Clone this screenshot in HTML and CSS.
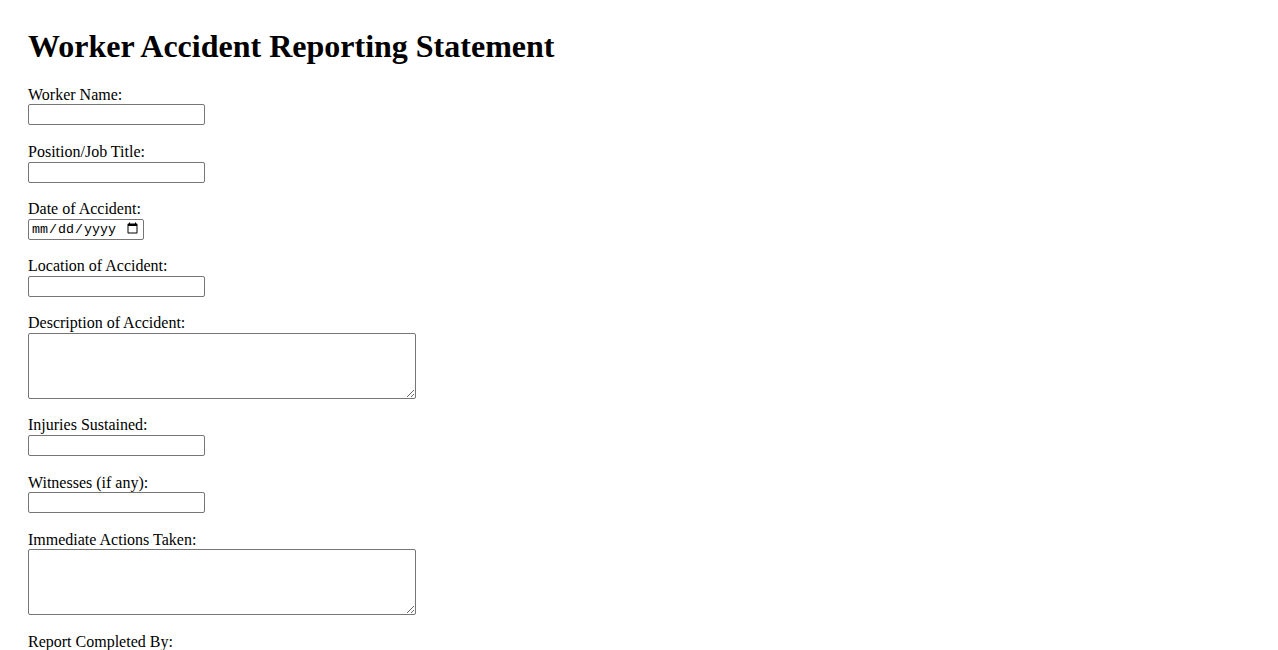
FILE: index.html
```html
<!DOCTYPE html>
<html lang="en">
<head>
<meta charset="utf-8">
<title>Worker Accident Reporting Statement</title>
<link rel="stylesheet" href="styles.css">
</head>
<body>
<div class="page">
  <h1 class="title">Worker Accident Reporting Statement</h1>
  <form class="report">
    <div class="field">
      <label for="name">Worker Name:</label>
      <input class="text" type="text" id="name">
    </div>
    <div class="field">
      <label for="position">Position/Job Title:</label>
      <input class="text" type="text" id="position">
    </div>
    <div class="field">
      <label for="date">Date of Accident:</label>
      <input class="date" type="date" id="date">
    </div>
    <div class="field">
      <label for="location">Location of Accident:</label>
      <input class="text" type="text" id="location">
    </div>
    <div class="field">
      <label for="description">Description of Accident:</label>
      <textarea class="area" id="description"></textarea>
    </div>
    <div class="field">
      <label for="injuries">Injuries Sustained:</label>
      <input class="text" type="text" id="injuries">
    </div>
    <div class="field">
      <label for="witnesses">Witnesses (if any):</label>
      <input class="text" type="text" id="witnesses">
    </div>
    <div class="field">
      <label for="actions">Immediate Actions Taken:</label>
      <textarea class="area" id="actions"></textarea>
    </div>
    <div class="field">
      <label for="completed">Report Completed By:</label>
      <input class="text" type="text" id="completed">
    </div>
  </form>
</div>
</body>
</html>
```

FILE: styles.css
```css
html, body {
  margin: 0;
  padding: 0;
  background: #ffffff;
}

body {
  font-family: "Liberation Serif", "Times New Roman", serif;
  font-size: 16px;
  color: #000000;
}

.page {
  padding: 28px;
}

.title {
  margin: 0 0 21px 0;
  font-size: 32px;
  font-weight: bold;
  line-height: 37px;
}

.report {
  display: flex;
  flex-direction: column;
}

.field {
  display: flex;
  flex-direction: column;
  align-items: flex-start;
  margin-bottom: 17.7px;
}

.field label {
  line-height: 18.4px;
}

.text,
.date,
.area {
  box-sizing: border-box;
  margin: 0;
  border: 1px solid #767676;
  border-radius: 2px;
  background: #ffffff;
}

.text {
  width: 177px;
  height: 21px;
  padding: 1px 2px;
  font-family: "Liberation Sans", Arial, sans-serif;
  font-size: 13.33px;
}

.date {
  width: 116px;
  height: 21px;
  padding: 1px 2px;
  font-family: "Liberation Mono", "Courier New", monospace;
  font-size: 13.33px;
}

.area {
  width: 388px;
  height: 66px;
  padding: 2px;
  font-family: "Liberation Mono", monospace;
  font-size: 13.33px;
}
```
